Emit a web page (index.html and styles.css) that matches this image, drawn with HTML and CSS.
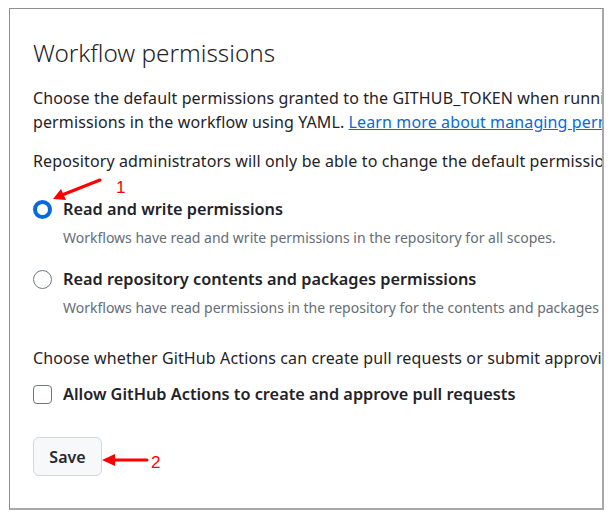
FILE: index.html
```html
<!DOCTYPE html>
<html>
<head>
<meta charset="utf-8">
<link rel="stylesheet" href="styles.css">
</head>
<body>
<div class="frame">
  <div class="content">
    <h2 class="title">Workflow permissions</h2>
    <p class="text intro">Choose the default permissions granted to the GITHUB_TOKEN when running workflows in this repository. You can specify more granular<br>permissions in the workflow using YAML. <a class="link" href="#">Learn more about managing permissions.</a></p>
    <p class="text admins">Repository administrators will only be able to change the default permissions to a more restrictive setting.</p>
    <div class="option first">
      <span class="radio checked"></span>
      <span class="label">Read and write permissions</span>
    </div>
    <div class="note">Workflows have read and write permissions in the repository for all scopes.</div>
    <div class="option second">
      <span class="radio"></span>
      <span class="label">Read repository contents and packages permissions</span>
    </div>
    <div class="note">Workflows have read permissions in the repository for the contents and packages scopes only.</div>
    <p class="text pr">Choose whether GitHub Actions can create pull requests or submit approving pull request reviews.</p>
    <div class="option check-row">
      <span class="checkbox"></span>
      <span class="label">Allow GitHub Actions to create and approve pull requests</span>
    </div>
    <button class="save">Save</button>
  </div>
</div>
<svg class="marks" width="615" height="525" viewBox="0 0 615 525">
  <line x1="100" y1="180" x2="62" y2="195" stroke="#f00" stroke-width="3" stroke-linecap="round"/>
  <polygon points="53,199 61,189 66,200" fill="#f00"/>
  <text x="116" y="193" class="num">1</text>
  <line x1="147" y1="460" x2="112" y2="460" stroke="#f00" stroke-width="3" stroke-linecap="round"/>
  <polygon points="102,460 115,454 115,466" fill="#f00"/>
  <text x="151" y="468" class="num">2</text>
</svg>
</body>
</html>
```
FILE: styles.css
```css
html, body {
  margin: 0;
  padding: 0;
  background: #fff;
}
body {
  position: relative;
  width: 615px;
  height: 525px;
  font-family: "Noto Sans", "Open Sans", sans-serif;
  color: #1f2328;
}
.frame {
  position: relative;
  margin: 8px 0 0 9px;
  width: 592px;
  height: 499px;
  border-top: 1px solid #8f8f8f;
  border-left: 1px solid #8f8f8f;
  border-right: 2px solid #a8a8a8;
  border-bottom: 2px solid #a8a8a8;
  overflow: hidden;
}
.content {
  padding: 29px 0 0 23px;
  width: 1000px;
}
.title {
  margin: 0;
  font-size: 24.3px;
  font-weight: 300;
  line-height: 30px;
  color: #1f2328;
}
.text {
  margin: 0;
  font-size: 16px;
  line-height: 24px;
  letter-spacing: 0.12px;
  white-space: nowrap;
}
.intro {
  margin-top: 18px;
}
.link {
  color: #0969da;
  text-decoration: underline;
}
.admins {
  margin-top: 15px;
}
.option {
  display: flex;
  align-items: center;
  gap: 11px;
  height: 24px;
}
.first { margin-top: 24px; }
.second { margin-top: 19px; }
.check-row { margin-top: 12px; }
.label {
  font-size: 16.3px;
  font-weight: 600;
  white-space: nowrap;
}
.note {
  margin: 7px 0 0 30px;
  font-size: 14px;
  line-height: 20px;
  color: #656d76;
  white-space: nowrap;
}
.pr {
  margin-top: 28px;
}
.radio {
  box-sizing: border-box;
  width: 19px;
  height: 19px;
  border-radius: 50%;
  border: 1px solid #6e7781;
  background: #fff;
  flex: none;
}
.radio.checked {
  border: 4px solid #0969da;
}
.checkbox {
  box-sizing: border-box;
  width: 19px;
  height: 19px;
  border-radius: 4px;
  border: 1px solid #6e7781;
  background: #fff;
  flex: none;
}
.save {
  display: block;
  margin-top: 31px;
  box-sizing: border-box;
  width: 69px;
  height: 39px;
  border: 1px solid #d0d7de;
  border-radius: 6px;
  background: #f6f8fa;
  font-family: "Noto Sans", "Open Sans", sans-serif;
  font-size: 16px;
  font-weight: 600;
  color: #24292f;
  padding: 0;
}
.marks {
  position: absolute;
  left: 0;
  top: 0;
  pointer-events: none;
}
.num {
  font-family: "Liberation Sans", sans-serif;
  font-size: 17px;
  fill: #f00;
}
```
